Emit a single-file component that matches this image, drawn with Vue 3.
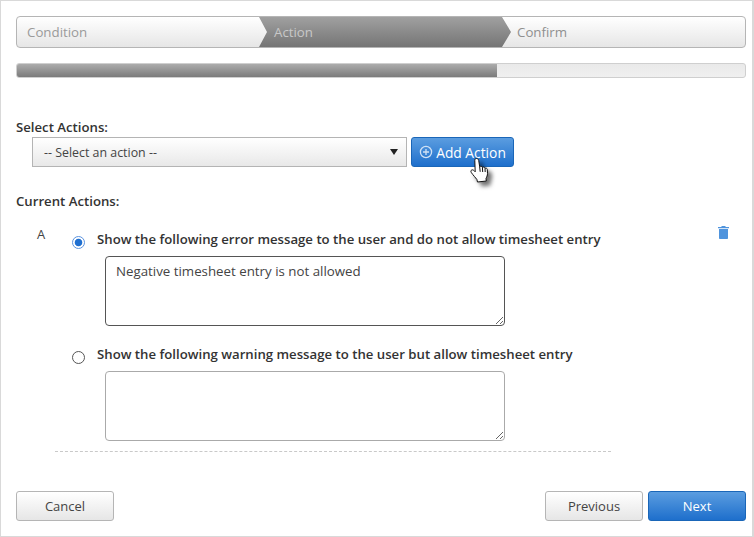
<script setup>
const steps = [
  { name: 'Condition', cls: 'first' },
  { name: 'Action', cls: 'active' },
  { name: 'Confirm', cls: 'last' }
]
const progress = 65.93
const errorMessage = 'Negative timesheet entry is not allowed'
</script>

<template>
  <div class="frame">
    <div class="wizard">
      <div v-for="s in steps" :key="s.name" class="step" :class="s.cls">{{ s.name }}</div>
    </div>
    <div class="progress"><div class="fill" :style="{ width: progress + '%' }"></div></div>

    <div class="heading select-heading">Select Actions:</div>
    <div class="picker">
      <div class="select">
        <span>-- Select an action --</span>
        <span class="caret"></span>
      </div>
      <button class="btn primary add">
        <svg width="14" height="14" viewBox="0 0 14 14" class="plus">
          <circle cx="7" cy="7" r="5.6" fill="none" stroke="#cfe1f5" stroke-width="1.3" />
          <path d="M7 4v6M4 7h6" stroke="#cfe1f5" stroke-width="1.3" />
        </svg>
        Add Action
      </button>
      <svg class="hand" width="22" height="28" viewBox="0 0 22 28">
        <path d="M6.500 1.500c1 0 2 .7 2.200 1.800l1 6.500c.8-.8 2.300-.6 2.700.6.800-.7 2.300-.4 2.600.9.900-.5 2.200 0 2.300 1.200l.2 4c0 2-.8 3.500-1.500 5l.3 2.500-8.800 1-.6-2.500c-1.500-2-3.500-4-5.500-6.800-.8-1.100-.6-2.300.3-2.700 1-.5 2.200.2 3.500 1.800L4.800 3.500c-.2-1.100.5-2 1.700-2z" fill="#fff" stroke="#111" stroke-width="1" stroke-linejoin="round"/>
        <path d="M9.700 9.800l.5 5M12.400 10.400l.3 4.600M15 11.300l.2 3.700" stroke="#111" stroke-width="1" fill="none"/>
      </svg>
    </div>

    <div class="heading current-heading">Current Actions:</div>
    <div class="action">
      <div class="letter">A</div>
      <div class="options">
        <div class="option">
          <label class="opt-label">
            <input type="radio" name="msg" checked />
            <span>Show the following error message to the user and do not allow timesheet entry</span>
          </label>
          <textarea class="dark" :value="errorMessage"></textarea>
        </div>
        <div class="option second">
          <label class="opt-label">
            <input type="radio" name="msg" />
            <span>Show the following warning message to the user but allow timesheet entry</span>
          </label>
          <textarea></textarea>
        </div>
      </div>
      <svg class="trash" width="11" height="13" viewBox="0 0 11 13">
        <path d="M3.500 0h4v1h-4zM0 1h11v1.300H0zM1 3h9v9.200a.8.800 0 0 1-.8.800H1.800a.8.800 0 0 1-.8-.8z" fill="#4f94dd"/>
      </svg>
    </div>
    <div class="divider"></div>

    <div class="footer">
      <button class="btn default">Cancel</button>
      <div class="right">
        <button class="btn default">Previous</button>
        <button class="btn primary">Next</button>
      </div>
    </div>
  </div>
</template>

<style>
html, body { margin: 0; background: #fff; }
</style>

<style scoped>
.frame {
  box-sizing: border-box;
  width: 754px;
  height: 537px;
  border: 1px solid #d9d9d9;
  border-right-width: 2px;
  padding: 15px 6px 0 15px;
  font-family: "Open Sans", "Noto Sans", sans-serif;
  font-size: 13px;
  color: #333;
  background: #fff;
}
.wizard {
  box-sizing: border-box;
  height: 32px;
  display: flex;
  border: 1px solid #b5b5b5;
  border-radius: 4px;
  background: linear-gradient(#fff, #e6e6e6);
  overflow: hidden;
}
.step {
  box-sizing: border-box;
  line-height: 30px;
  color: #9a9a9a;
  font-size: 13.3px;
}
.first { width: 242px; padding-left: 10px; }
.active {
  width: 252px;
  margin-right: -9px;
  padding-left: 15px;
  color: #c8c8c8;
  background: linear-gradient(#a0a0a0, #757575);
  clip-path: polygon(0 0, calc(100% - 9px) 0, 100% 50%, calc(100% - 9px) 100%, 0 100%, 8px 50%);
}
.last { padding-left: 15px; color: #8f8f8f; }
.progress {
  box-sizing: border-box;
  height: 15px;
  margin-top: 15px;
  border: 1px solid #cfcfcf;
  border-radius: 3px;
  background: linear-gradient(#e9e9e9, #f0f0f0);
  overflow: hidden;
}
.fill {
  height: 100%;
  background: linear-gradient(#acacac, #7b7b7b);
}
.heading {
  font-size: 13.2px;
  font-weight: 600;
  line-height: 18px;
}
.select-heading { margin-top: 40px; }
.picker {
  position: relative;
  display: flex;
  gap: 4px;
  margin: 1px 0 0 16px;
}
.select {
  box-sizing: border-box;
  width: 375px;
  height: 30px;
  padding: 0 8px 0 11px;
  display: flex;
  align-items: center;
  justify-content: space-between;
  border: 1px solid #b4b4b4;
  background: linear-gradient(#fff, #e8e8e8);
  color: #444;
  font-size: 12.4px;
}
.caret {
  width: 0;
  height: 0;
  border-left: 4.5px solid transparent;
  border-right: 4.5px solid transparent;
  border-top: 6px solid #222;
}
.btn {
  box-sizing: border-box;
  height: 30px;
  border-radius: 3px;
  font: inherit;
  font-size: 13px;
  padding: 0;
}
.primary {
  width: 98px;
  border: 1px solid #1a66b8;
  color: #fff;
  background: linear-gradient(#5b9de0, #1e6fcc);
}
.default {
  width: 98px;
  border: 1px solid #b5b5b5;
  color: #444;
  background: linear-gradient(#fff, #e6e6e6);
}
.add {
  width: 103px;
  display: flex;
  align-items: center;
  justify-content: center;
  gap: 3px;
  font-size: 13.8px;
}
.hand {
  position: absolute;
  left: 438px;
  top: 20px;
  filter: drop-shadow(4px 4px 2px rgba(0,0,0,.55));
}
.current-heading { margin-top: 25px; }
.action {
  position: relative;
  display: flex;
  margin-top: 14px;
  padding-left: 21px;
}
.letter {
  width: 34px;
  line-height: 18px;
  margin-top: 1px;
  color: #444;
}
.options { flex: 0 0 auto; }
.opt-label {
  display: flex;
  align-items: center;
  gap: 12px;
  height: 18px;
  margin: 6px 0 0 0;
  font-size: 13.2px;
  font-weight: 600;
}
.opt-label input {
  appearance: none;
  box-sizing: border-box;
  margin: 6px 0 0 1px;
  width: 13px;
  height: 13px;
  border: 1px solid #555;
  border-radius: 50%;
  background: #fff;
}
.opt-label input:checked {
  border-color: #5b93e0;
  background: radial-gradient(circle, #1f6fd0 0 3.4px, #fff 4.2px);
}
textarea {
  display: block;
  box-sizing: border-box;
  width: 400px;
  height: 70px;
  margin: 8px 0 0 34px;
  padding: 5px 10px;
  border: 1px solid #aaa;
  border-radius: 4px;
  font: inherit;
  font-size: 13.3px;
  color: #444;
  outline: none;
}
textarea.dark { border-color: #555; }
.second { margin-top: 19px; }
.trash {
  position: absolute;
  left: 702px;
  top: 2px;
}
.divider {
  width: 556px;
  margin: 10px 0 0 39px;
  border-top: 1px dashed #c9c9c9;
}
.footer {
  display: flex;
  justify-content: space-between;
  margin-top: 39px;
}
.right { display: flex; gap: 5px; }
</style>
